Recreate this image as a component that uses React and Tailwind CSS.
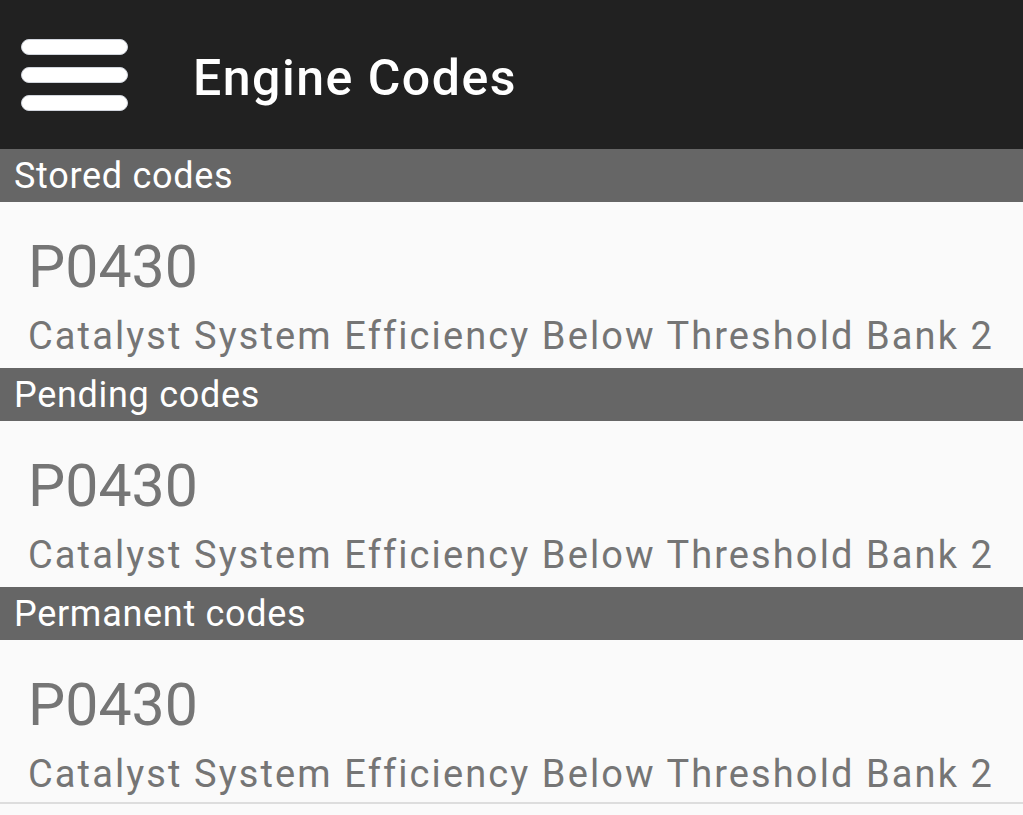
const sections = [
  { title: 'Stored codes', code: 'P0430', desc: 'Catalyst System Efficiency Below Threshold Bank 2' },
  { title: 'Pending codes', code: 'P0430', desc: 'Catalyst System Efficiency Below Threshold Bank 2' },
  { title: 'Permanent codes', code: 'P0430', desc: 'Catalyst System Efficiency Below Threshold Bank 2' },
];

function MenuIcon() {
  return (
    <div className="flex flex-col gap-[12px] w-[107px]">
      <div className="h-[16px] rounded-full bg-white border border-gray-300" />
      <div className="h-[16px] rounded-full bg-white border border-gray-300" />
      <div className="h-[16px] rounded-full bg-white border border-gray-300" />
    </div>
  );
}

export default function App() {
  return (
    <div className="w-[1023px] h-[815px] overflow-hidden bg-[#fafafa] font-['Roboto',sans-serif]">
      <header className="h-[149px] bg-[#212121] flex items-center pl-[21px]">
        <MenuIcon />
        <h1 className="ml-[65px] mt-[6px] text-white text-[50px] font-medium leading-[60px] tracking-[1.5px]">Engine Codes</h1>
      </header>

      {sections.map((s, i) => (
        <section key={i}>
          <div className="h-[53px] bg-[#666666] flex items-center pl-[14px] text-white text-[36px] leading-[53px] tracking-[0.7px] pt-[2px]">
            {s.title}
          </div>
          <div className={`pl-[28px] pt-[30px] ${i === sections.length - 1 ? 'border-b-2 border-[#dddddd] h-[164px]' : 'h-[166px]'}`}>
            <div className="text-[59px] leading-[70px] text-[#757575]">{s.code}</div>
            <div className="mt-[12px] text-[38px] leading-[44px] text-[#757575] tracking-[2.1px] whitespace-nowrap">{s.desc}</div>
          </div>
        </section>
      ))}
    </div>
  );
}
